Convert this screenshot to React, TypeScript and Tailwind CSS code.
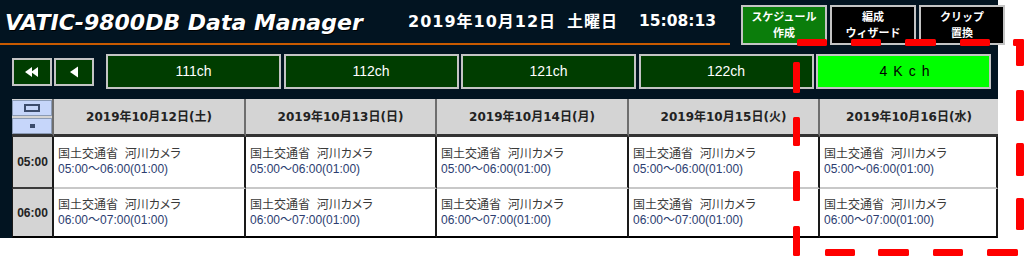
const CHANNELS = ["111ch", "112ch", "121ch", "122ch"];

const DAYS = [
  "2019年10月12日(土)",
  "2019年10月13日(日)",
  "2019年10月14日(月)",
  "2019年10月15日(火)",
  "2019年10月16日(水)",
];

const ROWS = [
  { time: "05:00", range: "05:00〜06:00(01:00)", h: "h-[52px]", last: false },
  { time: "06:00", range: "06:00〜07:00(01:00)", h: "h-[49px]", last: true },
];

// red annotation dashes, measured off the picture
const DASHES: [number, number, number, number][] = [
  [797, 39, 30, 7],
  [851, 39, 30, 7],
  [905, 39, 31, 7],
  [960, 39, 30, 7],
  [1013, 39, 11, 7],
  [1016, 39, 8, 27],
  [1016, 90, 8, 31],
  [1016, 143, 8, 33],
  [1016, 198, 8, 32],
  [793, 62, 7, 31],
  [793, 117, 7, 29],
  [793, 171, 7, 30],
  [793, 226, 7, 30],
  [825, 249, 30, 7],
  [878, 249, 31, 7],
  [933, 249, 30, 7],
  [987, 249, 31, 7],
];

function TopButton({ l1, l2, green }: { l1: string; l2: string; green?: boolean }) {
  return (
    <div
      className={`w-[86px] h-[40px] shrink-0 border-2 border-[#c4c4c4] flex flex-col items-center justify-center text-white font-bold text-[11px] leading-[16px] ${
        green ? "bg-[#0b7d0b]" : "bg-black"
      }`}
    >
      <div>{l1}</div>
      <div>{l2}</div>
    </div>
  );
}

function ArrowButton({ double }: { double?: boolean }) {
  return (
    <div className="w-[40px] h-[28px] bg-[#003d00] border-2 border-[#c4c4c4] flex items-center justify-center">
      <svg width="16" height="12" viewBox="0 0 16 12">
        {double ? (
          <>
            <polygon points="1,6 8,1 8,11" fill="white" />
            <polygon points="7,6 14,1 14,11" fill="white" />
          </>
        ) : (
          <polygon points="4,6 12,0.5 12,11.5" fill="white" />
        )}
      </svg>
    </div>
  );
}

export default function App() {
  return (
    <div className="relative w-[1024px] h-[256px] bg-white overflow-hidden font-['Liberation_Sans','Noto_Sans_CJK_JP',sans-serif]">
      <div className="w-[998px] h-[238px] bg-[#021421] flex flex-col">
        {/* title bar */}
        <div className="flex h-[54px]">
          <div className="w-[730px] shrink-0 h-[45px] border-b-2 border-[#c85a00] flex items-center">
            <div className="w-[408px] shrink-0 pl-[5px] pt-[2px] text-white font-bold italic text-[22px] font-['DejaVu_Sans',sans-serif] [text-shadow:1px_1px_0_#000]">
              VATIC-9800DB Data Manager
            </div>
            <div className="flex items-center text-white font-bold text-[16px] font-['DejaVu_Sans','Noto_Sans_CJK_JP',sans-serif] pt-[1px]">
              <span className="w-[159px] tracking-[1px]">2019年10月12日</span>
              <span className="w-[72px] tracking-[1px]">土曜日</span>
              <span className="text-[15.5px]">15:08:13</span>
            </div>
          </div>
          <div className="flex gap-[3px] ml-[11px] pt-[5px]">
            <TopButton l1="スケジュール" l2="作成" green />
            <TopButton l1="編成" l2="ウィザード" />
            <TopButton l1="クリップ" l2="置換" />
          </div>
        </div>

        {/* channel row */}
        <div className="flex items-center h-[35px] pl-[12px]">
          <div className="flex gap-[2px]">
            <ArrowButton double />
            <ArrowButton />
          </div>
          <div className="flex gap-[2.5px] ml-[12px]">
            {CHANNELS.map((c) => (
              <div
                key={c}
                className="w-[175px] shrink-0 h-[35px] bg-[#003d00] border-2 border-[#c4c4c4] flex items-center justify-center text-white text-[14px]"
              >
                {c}
              </div>
            ))}
            <div className="w-[175px] shrink-0 h-[35px] bg-[#00ff00] border-2 border-[#c4c4c4] flex items-center justify-center text-black text-[14px] tracking-[6px] pl-[8px]">
              4Kch
            </div>
          </div>
        </div>

        {/* schedule table */}
        <div className="mt-[10px] ml-[12px] grid grid-cols-[42px_192px_191px_192px_191px_178px]">
          <div className="h-[38px] bg-[#d4d4d4] border-r-2 border-[#6e6e6e] border-b-[3px] border-b-[#333] flex flex-col items-center gap-[2px] pt-[1px]">
            <div className="w-[40px] h-[17px] bg-[#c6d6fa] border border-[#8b9bb5] flex items-center justify-center">
              <div className="w-[16px] h-[8px] border-2 border-[#3c4c6c]" />
            </div>
            <div className="w-[40px] h-[17px] bg-[#c6d6fa] border border-[#8b9bb5] flex items-center justify-center">
              <div className="w-[5px] h-[4px] bg-[#3c4c6c]" />
            </div>
          </div>
          {DAYS.map((d, i) => (
            <div
              key={d}
              className={`h-[38px] bg-[#d4d4d4] border-b-[3px] border-b-[#333] flex items-center justify-center font-bold text-[12px] text-[#222] font-['DejaVu_Sans','Noto_Sans_CJK_JP',sans-serif] ${
                i < DAYS.length - 1 ? "border-r-2 border-r-[#6e6e6e]" : ""
              }`}
            >
              {d}
            </div>
          ))}

          {ROWS.map((r) => (
            <div key={r.time} className="contents">
              <div
                className={`${r.h} bg-[#d4d4d4] border-l border-r-2 border-[#1a1a1a] flex items-center justify-center font-bold text-[12px] text-[#222] ${
                  r.last ? "border-b-2 border-b-black" : "border-b-2 border-b-[#3a3a3a]"
                }`}
              >
                {r.time}
              </div>
              {DAYS.map((d) => (
                <div
                  key={d}
                  className={`${r.h} bg-white border-r-2 border-r-[#1a1a1a] flex flex-col justify-center pl-[4px] text-[12px] leading-[15px] ${
                    r.last ? "border-b-2 border-b-black" : "border-b-2 border-b-[#c8c8c8]"
                  }`}
                >
                  <div className="text-[#3a3a3a] [font-feature-settings:'palt']">国土交通省&nbsp;&nbsp;河川カメラ</div>
                  <div className="text-[#2c3d70]">{r.range}</div>
                </div>
              ))}
            </div>
          ))}
        </div>
      </div>

      <svg className="absolute inset-0 pointer-events-none" width="1024" height="256" viewBox="0 0 1024 256">
        {DASHES.map(([x, y, w, h], i) => (
          <rect key={i} x={x} y={y} width={w} height={h} rx="1.5" fill="#ff0000" />
        ))}
      </svg>
    </div>
  );
}
